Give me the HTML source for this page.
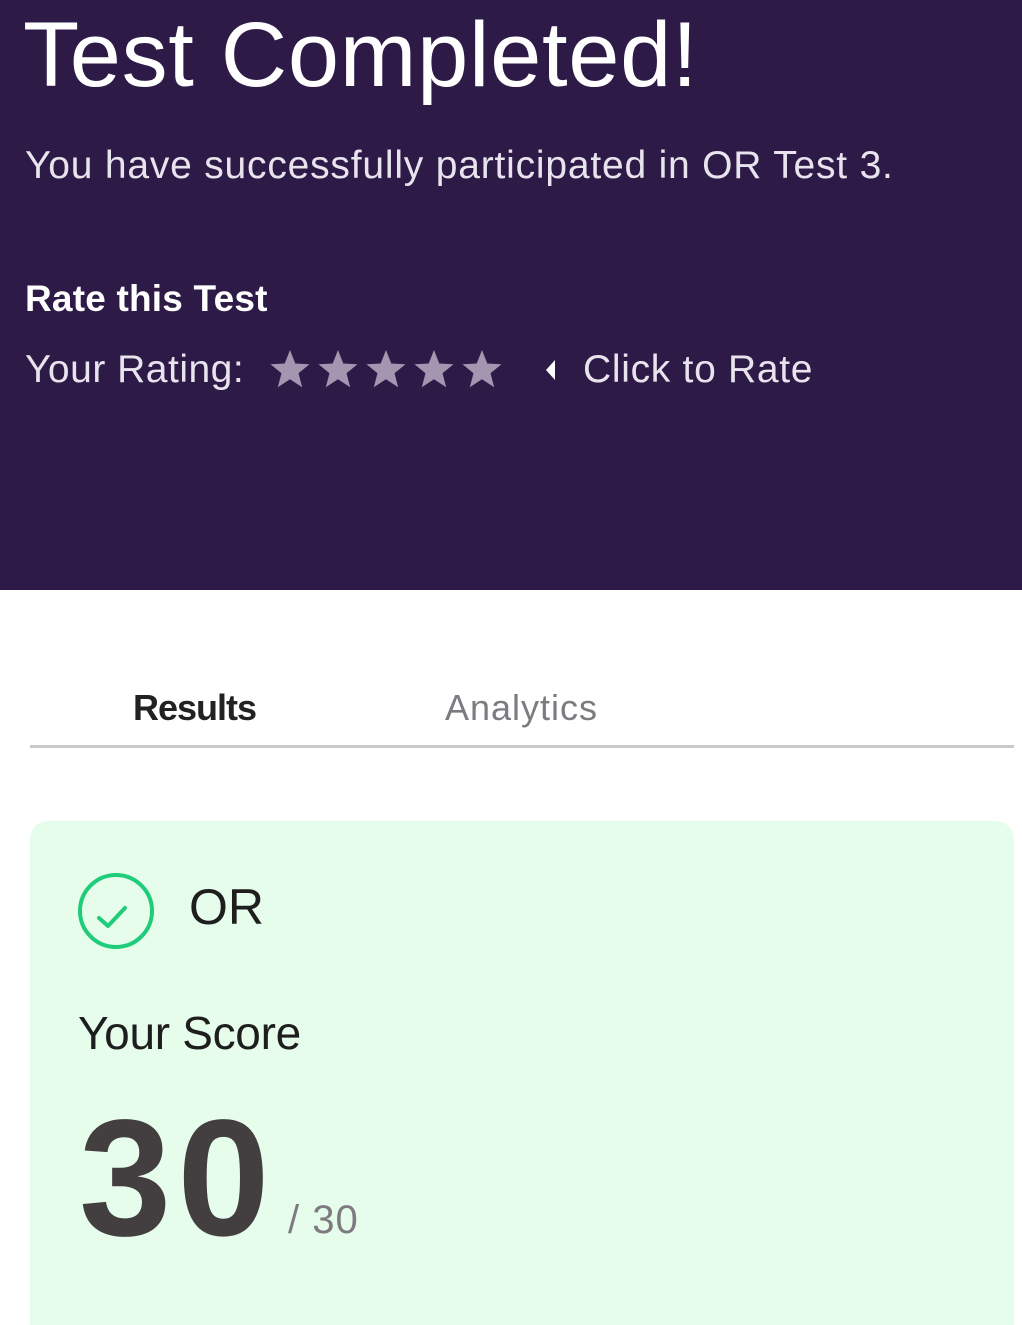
<!DOCTYPE html>
<html style="overflow:hidden;height:1325px"><head><meta charset="utf-8"><style>
*{margin:0;padding:0;box-sizing:border-box}
body{width:1022px;height:1325px;overflow:hidden;background:#fff;font-family:"Liberation Sans",sans-serif;position:relative}
.hdr{position:absolute;left:0;top:0;width:1022px;height:590px;background:#2e1a47}
.a{position:absolute;white-space:nowrap;line-height:1}
</style></head><body>
<div class="hdr"></div>
<div class="a" style="left:23px;top:9px;font-size:92px;color:#fff;font-weight:300;letter-spacing:0.7px">Test Completed!</div>
<div class="a" style="left:25px;top:146px;font-size:39px;color:#e8e4ee;letter-spacing:0.8px">You have successfully participated in OR Test 3.</div>
<div class="a" style="left:25px;top:280px;font-size:37px;color:#fff;font-weight:bold;letter-spacing:0.2px">Rate this Test</div>
<div class="a" style="left:25px;top:350px;font-size:39px;color:#e8e4ee;letter-spacing:0.5px">Your Rating:</div>
<svg class="a" style="left:268px;top:348px" width="240" height="44" viewBox="0 0 240 44">
<g fill="#a496b0">
<path id="s" d="M22 2 L27.3 15.5 L41.5 16.2 L30.5 25.3 L34.2 39.2 L22 31.3 L9.8 39.2 L13.5 25.3 L2.5 16.2 L16.7 15.5 Z"/>
<use href="#s" x="48"/><use href="#s" x="96"/><use href="#s" x="144"/><use href="#s" x="192"/>
</g></svg>
<svg class="a" style="left:543px;top:359px" width="14" height="22"><path d="M12 1 L3 11 L12 21 Z" fill="#fff"/></svg>
<div class="a" style="left:583px;top:350px;font-size:39px;color:#e8e4ee;letter-spacing:0.7px">Click to Rate</div>
<div class="a" style="left:133px;top:690px;font-size:36px;color:#222;font-weight:bold;letter-spacing:-1px">Results</div>
<div class="a" style="left:445px;top:690px;font-size:36px;color:#7d7a80;letter-spacing:1px">Analytics</div>
<div class="a" style="left:30px;top:745px;width:984px;height:3px;background:#c9c9c9"></div>
<div class="a" style="left:30px;top:821px;width:984px;height:504px;background:#e6fdec;border-radius:18px 18px 0 0"></div>
<svg class="a" style="left:76px;top:871px" width="80" height="80"><circle cx="40" cy="40" r="36" fill="none" stroke="#1fcc7a" stroke-width="4"/><path d="M23 47 L32 55 L49 37" fill="none" stroke="#1fcc7a" stroke-width="4" stroke-linecap="round" stroke-linejoin="round"/></svg>
<div class="a" style="left:189px;top:882px;font-size:50px;color:#1e1e1e">OR</div>
<div class="a" style="left:78px;top:1010px;font-size:46px;color:#1e1e1e;letter-spacing:-0.3px">Your Score</div>
<div class="a" style="left:79px;top:1096px;font-size:166px;color:#433e3f;font-weight:bold;letter-spacing:6px">30</div>
<div class="a" style="left:288px;top:1200px;font-size:40px;color:#7d7a80;letter-spacing:1px">/ 30</div>
</body></html>
